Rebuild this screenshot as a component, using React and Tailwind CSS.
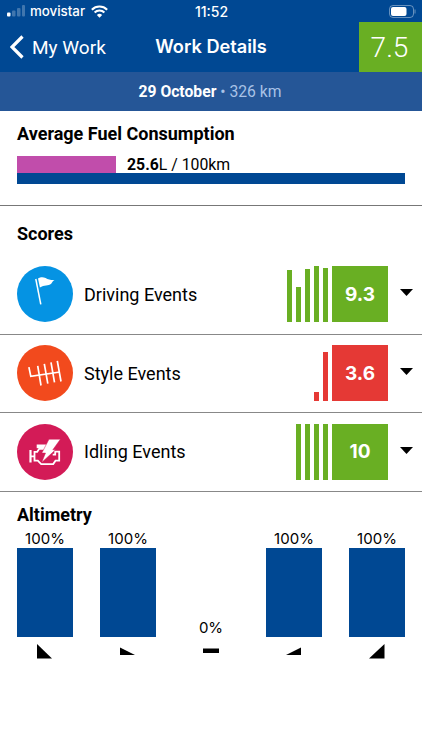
const BARS = [
  { value: 100, icon: "0,0 15,14.5 0,14.5" },
  { value: 100, icon: "0,3.5 15,11 0,11" },
  { value: 0, icon: "0,4.5 16,4.5 16,9 0,9" },
  { value: 100, icon: "15,3.5 15,11 0,11" },
  { value: 100, icon: "15.5,0 15.5,14.5 0,14.5" },
];

function FlagIcon() {
  return (
    <svg viewBox="0 0 56 56" className="size-14 shrink-0">
      <circle cx="28" cy="28" r="28" fill="#0593e3" />
      <path d="M18.800 13l5 25.300" stroke="#fff" strokeWidth="1.500" />
      <path d="M21 12.600c2.200-1.600 5-1.900 7.600-.6 2.700 1.500 5.400 2.200 8.900 2-1.800 1.100-2.300 2.200-3.300 3.700-2.900 2.400-7 .8-11.300 3.900z" fill="#fff" />
    </svg>
  );
}

function GearsIcon() {
  return (
    <svg viewBox="0 0 56 56" className="size-14 shrink-0">
      <circle cx="28" cy="28" r="28" fill="#f24a1d" />
      <path
        d="M11.900 22.200l1.900 9.200L43 27M20.700 20.800L24 40.500M27.300 18.800l3.500 19.800M34 17.300l3.500 20M40.300 15.800L44 36.500"
        stroke="#fff"
        strokeWidth="1.700"
        fill="none"
      />
    </svg>
  );
}

function EngineIcon() {
  return (
    <svg viewBox="0 0 56 56" className="size-14 shrink-0">
      <circle cx="28" cy="28" r="28" fill="#d31b57" />
      <path d="M13.500 26v12.500" stroke="#fff" strokeWidth="2.200" />
      <path d="M14 32.300h3.500v-4.500h2.700l2-3h10M17.500 32v4.700h3.300l3.400 3.400h12l2.300-3.400h3.700v-9h-4v3h-2.500" stroke="#fff" strokeWidth="1.800" fill="none" />
      <path d="M19.700 20.500h10v3.700h-10z" fill="#fff" />
      <path d="M32 15.200h11.400l-7.600 10.600h2.700L24.700 38.400l3.800-9.300h-3.700z" fill="#fff" stroke="#d31b57" strokeWidth=".5" />
    </svg>
  );
}

const SCORES = [
  { label: "Driving Events", score: "9.3", color: "bg-[#69af23]", icon: FlagIcon, bars: [52, 35, 53, 56, 54] },
  { label: "Style Events", score: "3.6", color: "bg-[#e53935]", icon: GearsIcon, bars: [9, 49] },
  { label: "Idling Events", score: "10", color: "bg-[#69af23]", icon: EngineIcon, bars: [56, 56, 56, 56] },
];

function StatusBar() {
  return (
    <div className="grid h-[22px] grid-cols-3 items-center pr-[6px] pl-[7px] font-['Inter',sans-serif] text-[13px] font-medium">
      <div className="flex items-center">
        <svg width="18" height="12" fill="#fff">
          <rect x="0" y="7.500" width="3.500" height="4" rx="1" />
          <rect x="5" y="5.500" width="3.500" height="6" rx="1" opacity=".25" />
          <rect x="10" y="3" width="3.500" height="8.500" rx="1" opacity=".25" />
          <rect x="15" y="0" width="3" height="11.500" rx="1" opacity=".25" />
        </svg>
        <span className="ml-[5px] pt-0.5 text-[13.300px]">movistar</span>
        <svg width="17" height="13" viewBox="0 0 16 12" className="ml-1.5 shrink-0" fill="none" stroke="#fff" strokeWidth="2">
          <path d="M.8 4.300a10.200 10.200 0 0 1 14.400 0M3.400 7a6.500 6.500 0 0 1 9.200 0" />
          <path d="M8 11.800L5.500 9.300a3.500 3.500 0 0 1 5 0z" fill="#fff" stroke="none" />
        </svg>
      </div>
      <span className="text-center text-[14px]">11:52</span>
      <svg width="27" height="13" className="justify-self-end">
        <rect x=".5" y=".5" width="24" height="12" rx="3.500" fill="none" stroke="#fff" opacity=".4" />
        <rect x="2" y="2" width="15.500" height="9" rx="2" fill="#fff" />
        <path d="M26 4.500v4" stroke="#fff" opacity=".4" />
      </svg>
    </div>
  );
}

export default function App() {
  return (
    <div className="h-[750px] w-[422px] overflow-hidden bg-white font-['Roboto',sans-serif] text-black">
      <header className="bg-[#004893] text-white">
        <StatusBar />
        <div className="grid h-[50px] grid-cols-[1fr_112px_1fr] items-center">
          <div className="flex items-center pl-[10px]">
            <svg width="14" height="24" fill="none" stroke="#fff" strokeWidth="3.200">
              <path d="M12.500 1.500L2 12l10.500 10.500" />
            </svg>
            <span className="ml-2 pt-0.5 text-[19px] font-normal">My Work</span>
          </div>
          <h1 className="flex justify-center font-['Inter',sans-serif] text-[18.200px] font-semibold whitespace-nowrap">Work Details</h1>
          <div className="flex h-[50px] w-[63px] items-center justify-center justify-self-end bg-[#69af23] pr-0.5 pt-0.5 text-[28px] font-[350]">
            7.5
          </div>
        </div>
        <div className="h-[39px] bg-[#255697] pr-0.5 text-center text-[15.700px] leading-[39px] text-[#a9c2e6]">
          <b className="text-white">29 October</b> • 326 km
        </div>
      </header>

      <section className="h-[95px] border-b border-[#777] px-[17px] pt-[11px]">
        <h2 className="text-[18px] leading-6 font-bold">Average Fuel Consumption</h2>
        <div className="mt-[10px] flex h-[17px] items-center">
          <div className="h-full w-[99px] bg-[#c14dab]" />
          <span className="ml-[11px] text-[15.800px] leading-4"><b>25.6</b>L / 100km</span>
        </div>
        <div className="h-[11px] bg-[#004893]" />
      </section>

      <section>
        <h2 className="h-[50px] px-[17px] pt-4 text-[18px] leading-6 font-bold">Scores</h2>
        {SCORES.map(({ label, score, color, icon: Icon, bars }) => (
          <div key={label} className="flex h-[78.700px] items-center border-b border-[#888] pr-[9px] pb-px pl-[17px]">
            <Icon />
            <span className="ml-[11px] flex-1 text-[18px]">{label}</span>
            <div className="flex h-14 items-end gap-1">
              {bars.map((height, i) => (
                <div key={i} className={`w-[5px] ${color}`} style={{ height }} />
              ))}
              <div className={`flex size-14 items-center justify-center pt-0.5 font-['Inter',sans-serif] text-[19px] font-bold text-white ${color}`}>
                {score}
              </div>
            </div>
            <svg width="13" height="7" className="mb-[3px] ml-3">
              <path d="M0 0h13L6.500 7z" />
            </svg>
          </div>
        ))}
      </section>

      <section className="px-[17px] pt-[11px]">
        <h2 className="text-[18px] leading-6 font-bold">Altimetry</h2>
        <div className="flex h-[110px] items-end justify-between">
          {BARS.map(({ value }, i) => (
            <div key={i} className="w-14 text-center font-['Inter',sans-serif] text-[15px] leading-[19px]">
              {value}%
              <div className="bg-[#004893]" style={{ height: value * 0.89 }} />
            </div>
          ))}
        </div>
        <div className="mt-[7px] flex justify-between">
          {BARS.map(({ icon }, i) => (
            <div key={i} className="flex w-14 justify-center">
              <svg width="16" height="15">
                <polygon points={icon} />
              </svg>
            </div>
          ))}
        </div>
      </section>
    </div>
  );
}
